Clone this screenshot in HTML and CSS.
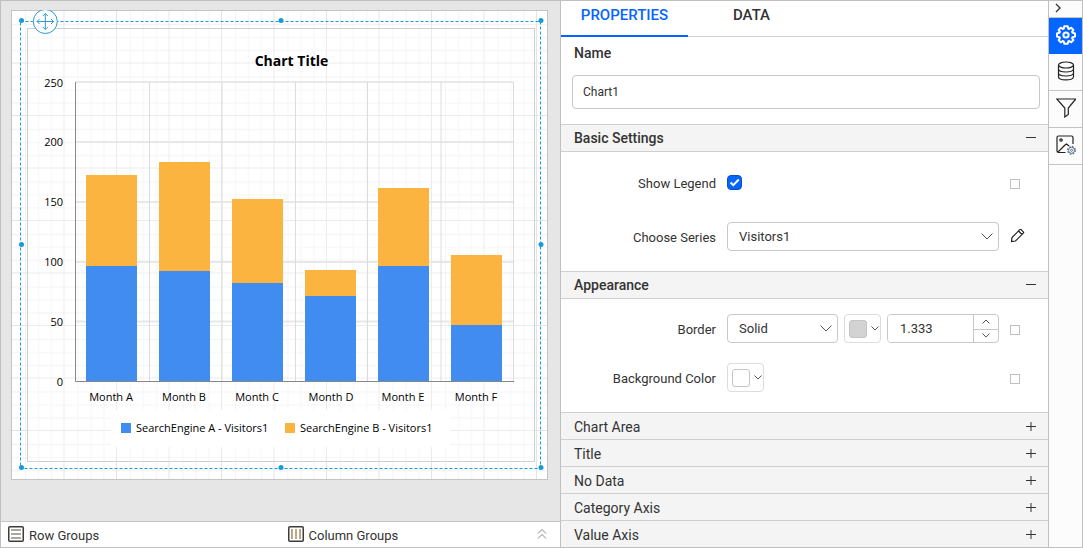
FILE: index.html
```html
<!DOCTYPE html>
<html lang="en">
<head>
<meta charset="utf-8">
<meta name="viewport" content="width=device-width, initial-scale=1">
<title>Report Designer</title>
<link rel="stylesheet" href="styles.css">
</head>
<body>
<div class="app">
  <main class="designer">
    <div class="stage">
      <svg class="sheet" viewBox="11 10 537 470" role="img" aria-label="Chart1 on the design surface">
        <defs>
          <pattern id="grid" x="12" y="11" width="52.5" height="52.5" patternUnits="userSpaceOnUse">
            <path class="grid-minor" d="M13.5 0V52.5M26.5 0V52.5M39.5 0V52.5M0 13.5H52.5M0 26.5H52.5M0 39.5H52.5"/>
            <path class="grid-major" d="M52 0V52.5M0 52H52.5"/>
          </pattern>
        </defs>
        <rect class="sheet-fill" x="11.5" y="10.5" width="536" height="469"/>
        <rect class="grid-fill" x="12" y="11" width="535" height="468" fill="url(#grid)"/>
        <rect class="chart-frame" x="27.5" y="28.5" width="507" height="433"/>
        <text class="chart-title" x="291.5" y="66">Chart Title</text>
        <path class="gridline" d="M76 82H513M76 142H513M76 202H513M76 262H513M76 321.5H513"/>
        <path class="gridline-v" d="M149.5 82V381M222 82V381M295.5 82V381M367.5 82V381M441 82V381M513.5 82V381"/>
        <g class="series-b">
          <rect x="86" y="175" width="51" height="91"/><rect x="159" y="162" width="51" height="109"/>
          <rect x="232" y="199" width="51" height="84"/><rect x="305" y="270" width="51" height="26"/>
          <rect x="378" y="188" width="51" height="78"/><rect x="451" y="255" width="51" height="70"/>
        </g>
        <g class="series-a">
          <rect x="86" y="266" width="51" height="115"/><rect x="159" y="271" width="51" height="110"/>
          <rect x="232" y="283" width="51" height="98"/><rect x="305" y="296" width="51" height="85"/>
          <rect x="378" y="266" width="51" height="115"/><rect x="451" y="325" width="51" height="56"/>
        </g>
        <path class="axis" d="M75.5 82V381.5H514"/>
        <g class="value-labels">
          <text x="63" y="87">250</text><text x="63" y="146">200</text><text x="63" y="206">150</text>
          <text x="63" y="266">100</text><text x="63" y="326">50</text><text x="63" y="386">0</text>
        </g>
        <g class="category-labels">
          <text x="111" y="401">Month A</text><text x="184" y="401">Month B</text><text x="257" y="401">Month C</text>
          <text x="331" y="401">Month D</text><text x="403" y="401">Month E</text><text x="476" y="401">Month F</text>
        </g>
        <rect class="legend-fill" x="111" y="410" width="339" height="37"/>
        <g class="legend">
          <rect class="series-a" x="121" y="423" width="10" height="10"/><text x="136" y="432">SearchEngine A - Visitors1</text>
          <rect class="series-b" x="285" y="423" width="10" height="10"/><text x="300" y="432">SearchEngine B - Visitors1</text>
        </g>
        <path class="selection" d="M20.5 21.5H540.5V468.5H20.5Z"/>
        <g class="handles">
          <circle cx="21.5" cy="20.5" r="2.5"/><circle cx="281" cy="20.5" r="2.5"/><circle cx="541" cy="20.5" r="2.5"/>
          <circle cx="21.5" cy="244.5" r="2.5"/><circle cx="541" cy="244.5" r="2.5"/>
          <circle cx="21.5" cy="467.5" r="2.5"/><circle cx="281" cy="467.5" r="2.5"/><circle cx="541" cy="467.5" r="2.5"/>
        </g>
        <g class="move-handle">
          <circle cx="45.3" cy="21.5" r="12"/>
          <path d="M37 21.5H53.5M45.3 13.5V29.5M42.8 16L45.3 13.5L47.8 16M42.8 27L45.3 29.5L47.8 27M39.5 19L37 21.5L39.5 24M51 19L53.5 21.5L51 24"/>
        </g>
      </svg>
    </div>
    <footer class="groups">
      <div class="group">
        <svg class="group-icon" viewBox="0 0 16 16"><rect x="0.75" y="0.75" width="14.5" height="14.5" rx="1"/><path d="M3 4H13M3 8H13M3 12H13"/></svg>
        <span>Row Groups</span>
      </div>
      <div class="group">
        <svg class="group-icon column" viewBox="0 0 16 16"><rect x="0.75" y="0.75" width="14.5" height="14.5" rx="1"/><path d="M4 3V13M8 3V13M12 3V13"/></svg>
        <span>Column Groups</span>
        <button class="expand" type="button" aria-label="Expand groups"><svg viewBox="0 0 10 12"><path d="M1 5.5L5 1.5L9 5.5M1 10.5L5 6.5L9 10.5"/></svg></button>
      </div>
    </footer>
  </main>

  <section class="panel">
    <nav class="tabs">
      <button class="tab active" type="button">PROPERTIES</button>
      <button class="tab" type="button">DATA</button>
    </nav>
    <div class="name-field">
      <label for="name">Name</label>
      <input id="name" type="text" value="Chart1">
    </div>

    <button class="section open" type="button"><span>Basic Settings</span><svg viewBox="0 0 10 10"><path d="M0 4.5H10"/></svg></button>
    <div class="rows basic">
      <div class="row">
        <label for="legend">Show Legend</label>
        <div class="controls"><span class="tick"><input id="legend" type="checkbox" checked><svg viewBox="0 0 15 15"><path d="M3.5 7.5L6.3 10.2L11.8 4.5"/></svg></span></div>
        <button class="advanced" type="button" aria-label="Advanced options for legend"></button>
      </div>
      <div class="row">
        <label for="series">Choose Series</label>
        <div class="controls"><span class="select"><select id="series"><option>Visitors1</option></select><svg viewBox="0 0 12 7"><path d="M0.5 0.5L6 6L11.5 0.5"/></svg></span></div>
        <button class="edit" type="button" aria-label="Edit series"><svg viewBox="0 0 15 15"><path d="M1.5 13.5L2 9.5L9.8 1.7Q10.5 1 11.2 1.7L13.3 3.8Q14 4.5 13.3 5.2L5.5 13L1.5 13.5ZM8.5 3L12 6.5"/></svg></button>
      </div>
    </div>

    <button class="section open" type="button"><span>Appearance</span><svg viewBox="0 0 10 10"><path d="M0 4.5H10"/></svg></button>
    <div class="rows">
      <div class="row">
        <label for="border">Border</label>
        <div class="controls">
          <span class="select"><select id="border"><option>Solid</option></select><svg viewBox="0 0 12 7"><path d="M0.5 0.5L6 6L11.5 0.5"/></svg></span>
          <button class="color" type="button" aria-label="Border color"><span class="swatch grey"></span><svg viewBox="0 0 8 5"><path d="M0.5 0.5L4 4L7.5 0.5"/></svg></button>
          <span class="spinner">
            <input type="text" inputmode="decimal" value="1.333" aria-label="Border width">
            <span class="steps">
              <button type="button" aria-label="Increase"><svg viewBox="0 0 8 5"><path d="M0.5 4.5L4 1L7.5 4.5"/></svg></button>
              <button type="button" aria-label="Decrease"><svg viewBox="0 0 8 5"><path d="M0.5 0.5L4 4L7.5 0.5"/></svg></button>
            </span>
          </span>
        </div>
        <button class="advanced" type="button" aria-label="Advanced options for border"></button>
      </div>
      <div class="row">
        <label for="background">Background Color</label>
        <div class="controls"><button id="background" class="color" type="button"><span class="swatch"></span><svg viewBox="0 0 8 5"><path d="M0.5 0.5L4 4L7.5 0.5"/></svg></button></div>
        <button class="advanced" type="button" aria-label="Advanced options for background"></button>
      </div>
    </div>

    <button class="section" type="button"><span>Chart Area</span><svg viewBox="0 0 10 10"><path d="M0 4.5H10M5 0V9"/></svg></button>
    <button class="section" type="button"><span>Title</span><svg viewBox="0 0 10 10"><path d="M0 4.5H10M5 0V9"/></svg></button>
    <button class="section" type="button"><span>No Data</span><svg viewBox="0 0 10 10"><path d="M0 4.5H10M5 0V9"/></svg></button>
    <button class="section" type="button"><span>Category Axis</span><svg viewBox="0 0 10 10"><path d="M0 4.5H10M5 0V9"/></svg></button>
    <button class="section" type="button"><span>Value Axis</span><svg viewBox="0 0 10 10"><path d="M0 4.5H10M5 0V9"/></svg></button>
  </section>

  <aside class="rail">
    <button class="collapse" type="button" aria-label="Collapse panel"><svg viewBox="0 0 6 10"><path d="M1 1L5 5L1 9"/></svg></button>
    <button class="tool active" type="button" aria-label="Properties">
      <svg viewBox="0 0 20 20"><path d="M8.3 1.2H11.7L12.3 3.6L13.2 4L15.2 2.7L17.4 4.9L16.1 6.9L16.5 7.8L19 8.4V11.6L16.5 12.2L16.1 13.1L17.4 15.1L15.2 17.3L13.2 16L12.3 16.4L11.7 18.8H8.3L7.7 16.4L6.8 16L4.8 17.3L2.6 15.1L3.9 13.1L3.5 12.2L1 11.6V8.4L3.5 7.8L3.9 6.9L2.6 4.9L4.8 2.7L6.8 4L7.7 3.6Z"/><circle cx="10" cy="10" r="2.6"/></svg>
    </button>
    <button class="tool" type="button" aria-label="Data">
      <svg viewBox="0 0 20 20"><ellipse cx="10" cy="4" rx="7.5" ry="3"/><path d="M2.5 4V15.8C2.5 20 17.5 20 17.5 15.8V4M2.5 8C2.5 12 17.5 12 17.5 8M2.5 12C2.5 16 17.5 16 17.5 12"/></svg>
    </button>
    <button class="tool" type="button" aria-label="Filter">
      <svg viewBox="0 0 20 20"><path d="M0.8 1H19.8L12.3 10V16.5L8.8 19V10Z"/></svg>
    </button>
    <button class="tool" type="button" aria-label="Image settings">
      <svg viewBox="0 0 20 20"><path d="M9.5 17.5H2.5Q1 17.5 1 16V2.5Q1 1 2.5 1H15.5Q17 1 17 2.5V9M2 17L9 10L10.5 9L13 11"/><circle cx="5" cy="5" r="1.2"/><circle class="cog-teeth" cx="15.5" cy="15.3" r="3.8"/><circle class="cog" cx="15.5" cy="15.3" r="3"/><circle class="cog" cx="15.5" cy="15.3" r="1"/></svg>
    </button>
  </aside>
</div>
</body>
</html>
```

FILE: styles.css
```css
* { box-sizing: border-box; }

body {
  margin: 0;
  font-family: Roboto, "Liberation Sans", sans-serif;
  font-size: 13px;
  line-height: 16px;
  color: #333;
}

button, input, select { font: inherit; color: inherit; margin: 0; }
button { padding: 0; border: 0; background: none; cursor: pointer; }
svg { display: block; fill: none; stroke: #555; }

.app {
  display: grid;
  grid-template-columns: minmax(0, 1fr) 488px 34px;
  height: 100vh;
  overflow: hidden;
  border: 1px solid #c0c0c0;
  background: #fff;
}

/* Design surface */
.designer { display: flex; flex-direction: column; min-height: 0; background: #e6e6e6; }
.stage { flex: 1; min-height: 0; overflow: hidden; padding: 9px 12px 0 10px; }
.sheet { width: 100%; height: auto; font-family: "Open Sans", "Noto Sans", sans-serif; font-size: 11px; }
.sheet text { fill: #000; stroke: none; }
.sheet-fill { fill: #fff; stroke: #c4c4c4; }
.grid-fill { stroke: none; }
.grid-minor { stroke: #f2f2f2; }
.grid-major { stroke: #e4e4e4; }
.chart-frame { fill: #fff; fill-opacity: 0.3; stroke: #cfcfcf; }
.sheet .chart-title { font-size: 14px; font-weight: 700; text-anchor: middle; }
.gridline { stroke: #e8e8e8; stroke-width: 2; }
.gridline-v { stroke: #dcdcdc; }
.axis { stroke: #888; }
.series-a { fill: #418cf0; stroke: none; }
.series-b { fill: #fcb441; stroke: none; }
.value-labels { text-anchor: end; }
.category-labels { text-anchor: middle; }
.legend-fill { fill: #fff; stroke: none; }
.selection { stroke: #169bd7; stroke-dasharray: 3 2; }
.handles { fill: #169bd7; stroke: none; }
.move-handle { stroke: #2f9bd6; }
.move-handle circle { fill: #fff; }

.groups {
  display: grid;
  grid-template-columns: 1fr 1fr;
  align-items: center;
  height: 26px;
  border-top: 1px solid #c4c4c4;
  background: #fff;
}
.group { display: flex; align-items: flex-start; gap: 5px; padding-left: 7px; }
.group span { padding-top: 3px; }
.group-icon { width: 16px; height: 16px; margin-top: 1px; stroke: #3c3c3c; stroke-width: 1.5; }
.group-icon path { stroke: #8a8a80; }
.column path { stroke: #a8895c; }
.expand { margin: 3px 13px 0 auto; }
.expand svg { width: 10px; height: 12px; stroke: #888; }

/* Properties panel */
.panel { min-height: 0; overflow: hidden; border-left: 1px solid #c0c0c0; }
.tabs { display: flex; height: 36px; border-bottom: 1px solid #cfcfcf; }
.tab {
  width: 127px;
  height: 36px;
  padding-bottom: 6px;
  font-size: 15px;
  font-weight: 500;
  border-bottom: 2px solid transparent;
}
.tab.active { color: #0565ff; border-bottom-color: #0565ff; }

.name-field { display: flex; flex-direction: column; gap: 14px; padding: 8px 8px 15px 11px; }
.name-field label { padding-left: 2px; font-size: 14px; font-weight: 500; }
.name-field input {
  width: 100%;
  height: 34px;
  padding: 0 10px;
  font-size: 12px;
  border: 1px solid #c8c8c8;
  border-radius: 4px;
  background: #fff;
}

.section {
  display: flex;
  align-items: center;
  justify-content: space-between;
  width: 100%;
  height: 27px;
  padding: 2px 12px 0 13px;
  font-size: 14px;
  border-top: 1px solid #cfcfcf;
  background: #f4f4f4;
}
.section.open { height: 28px; padding-top: 0; font-weight: 500; border-bottom: 1px solid #cfcfcf; }
.section svg { width: 10px; height: 10px; stroke: #333; }

.rows { display: grid; gap: 20px; padding: 15px 0 20px; }
.rows.basic { gap: 25px; padding-top: 16px; }
.row {
  display: grid;
  grid-template-columns: 155px minmax(0, 1fr) 38px;
  column-gap: 11px;
  align-items: center;
  height: 29px;
}
.row > label { padding-top: 2px; text-align: right; }
.controls { display: flex; gap: 6px; }

.tick, .select { display: grid; align-items: center; }
.tick > *, .select > * { grid-area: 1 / 1; }
.tick svg, .select svg { pointer-events: none; }
.tick input {
  appearance: none;
  width: 15px;
  height: 15px;
  border: 1px solid #0a50c8;
  border-radius: 4px;
  background: #0565ff;
}
.tick svg { width: 15px; height: 15px; stroke: #fff; stroke-width: 2; }

.select { flex: 1; }
.select select {
  appearance: none;
  width: 100%;
  height: 29px;
  padding: 0 30px 0 11px;
  border: 1px solid #c8c8c8;
  border-radius: 4px;
  background: #fff;
}
.select svg { justify-self: end; width: 12px; height: 7px; margin-right: 6px; }

.color {
  display: flex;
  align-items: center;
  gap: 4px;
  width: 37px;
  height: 29px;
  padding-left: 4px;
  border: 1px solid #dcdcdc;
  border-radius: 4px;
}
.color svg { width: 8px; height: 5px; }
.swatch { width: 18px; height: 18px; border: 1px solid #c4c4c4; border-radius: 3px; }
.swatch.grey { background: #d3d3d3; }

.spinner {
  display: flex;
  width: 112px;
  height: 29px;
  overflow: hidden;
  border: 1px solid #c8c8c8;
  border-radius: 4px;
}
.spinner input { flex: 1; min-width: 0; padding: 0 0 0 12px; border: 0; }
.steps { display: grid; grid-template-rows: 1fr 1fr; width: 25px; border-left: 1px solid #c8c8c8; }
.steps button { display: grid; place-items: center; }
.steps button + button { border-top: 1px solid #c8c8c8; }
.steps svg { width: 8px; height: 5px; }

.advanced { width: 10px; height: 10px; margin-top: 2px; border: 1px solid #c0c0c0; }
.edit svg { width: 15px; height: 15px; margin-bottom: 2px; stroke: #222; stroke-width: 1.2; }

/* Tool rail */
.rail { border-left: 1px solid #c0c0c0; background: #fcfcfc; }
.rail button { display: grid; width: 100%; border-bottom: 1px solid #c4c4c4; }
.rail .collapse { height: 17px; padding: 2px 0 0 6px; }
.collapse svg { width: 6px; height: 10px; stroke: #333; stroke-width: 1.3; }
.rail .tool { place-items: center; height: 37px; padding-bottom: 2px; }
.tool svg { width: 20px; height: 20px; stroke: #222; stroke-width: 1.2; }
.rail .active { height: 36px; border-bottom-color: #0565ff; background: #0565ff; }
.tool.active svg { stroke: #fff; stroke-width: 2; stroke-linejoin: round; }
.tool .cog, .tool .cog-teeth { stroke: #5f7487; stroke-width: 1; }
.tool .cog-teeth { stroke-width: 1.5; stroke-dasharray: 1.5 1.5; }
```
